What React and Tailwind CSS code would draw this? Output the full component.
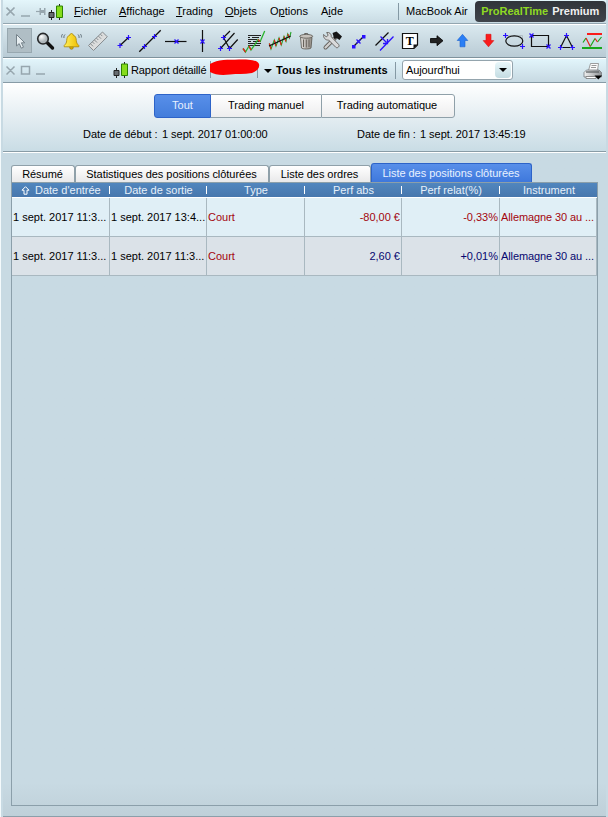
import React from 'react'

const BLUE = '#2a10ff'

// Small anchor marks used by the drawing tools
const Plus = ({ x, y }) => (
  <path d={`M${x - 2.5} ${y}H${x + 2.5}M${x} ${y - 2.5}V${y + 2.5}`} stroke={BLUE} strokeWidth="1.2" />
)
const Cross = ({ x, y }) => (
  <path d={`M${x - 2} ${y - 2}l4 4M${x + 2} ${y - 2}l-4 4`} stroke={BLUE} strokeWidth="1.3" />
)

const tools = [
  {
    name: 'cursor',
    active: true,
    icon: <path d="M9.500 6.500V18l2.700-2.400 2.100 4.600 2.200-1-2.100-4.400h3.400z" fill="#e6edf0" stroke="#75828a" />,
  },
  {
    name: 'zoom',
    icon: (
      <>
        <path d="M14.500 15l5 5" stroke="#111" strokeWidth="3.400" strokeLinecap="round" />
        <circle cx="10" cy="10.700" r="5.300" fill="url(#lens)" stroke="#26282a" strokeWidth="1.600" />
      </>
    ),
  },
  {
    name: 'alert',
    icon: (
      <>
        <circle cx="12.500" cy="19.500" r="1.800" fill="#d9ad00" stroke="#8a6d00" strokeWidth="0.600" />
        <path d="M12.500 5.500c1 0 1.400.6 1.500 1.500 2.500.8 3.200 3 3.300 5.500.1 2.200.8 3.300 2.500 5v1.300H5.200v-1.300c1.700-1.700 2.400-2.800 2.500-5 .1-2.500.8-4.700 3.300-5.500.1-.9.500-1.500 1.500-1.500z" fill="url(#gold)" stroke="#a98500" strokeWidth="0.800" />
        <path d="M6 6.500c-1 1-1.300 2.200-1 3.500M3.700 6c-1 1-1.300 2.200-1 3.500M19 6.500c1 1 1.300 2.200 1 3.500M21.300 6c1 1 1.300 2.200 1 3.500" fill="none" stroke="#53626b" strokeWidth="0.900" />
      </>
    ),
  },
  {
    name: 'ruler',
    icon: (
      <>
        <path d="M3.500 17.500L17.500 4l4.800 4.800L8.500 22.500z" fill="#dcdddd" stroke="#858b8f" />
        <path d="M5.500 15.800l2.500 2.500M7.500 14l1.800 1.800M9.500 12l2.500 2.500M11.500 10.200l1.800 1.800M13.500 8.200l2.500 2.500M15.500 6.300l1.800 1.800" stroke="#7b8286" strokeWidth="0.900" />
      </>
    ),
  },
  {
    name: 'segment',
    icon: (
      <>
        <path d="M9 17.500l8.500-8" stroke="#111" strokeWidth="1.300" />
        <Plus x={9} y={17.5} />
        <Plus x={17.5} y={9.5} />
      </>
    ),
  },
  {
    name: 'line',
    icon: (
      <>
        <path d="M2.300 23.700L23.700 2.300" stroke="#111" strokeWidth="1.300" />
        <Plus x={7.5} y={18.5} />
        <Plus x={17.5} y={8.5} />
      </>
    ),
  },
  {
    name: 'horizontal',
    icon: (
      <>
        <path d="M2 13.500h21.500" stroke="#111" strokeWidth="1.200" />
        <Cross x={13.5} y={13.5} />
      </>
    ),
  },
  {
    name: 'vertical',
    icon: (
      <>
        <path d="M13.500 2v22" stroke="#111" strokeWidth="1.200" />
        <Cross x={13.5} y={13.5} />
      </>
    ),
  },
  {
    name: 'pitchfork',
    icon: (
      <>
        <path d="M8.500 9.500L15 3M5.500 20.500L19.500 5M14.500 20.500l8.200-9M8.500 9.500l6 11" stroke="#111" strokeWidth="1.200" />
        <Plus x={8.5} y={9.5} />
        <Plus x={5.5} y={20.5} />
        <Plus x={14.5} y={20.5} />
      </>
    ),
  },
  {
    name: 'indicator',
    icon: (
      <>
        <path d="M7 7.500h13M7 9.500h2m2 0h7M7 11.500h9M7 13.500h3m2 0h8M7 15.500h13M7 17.500h12" stroke="#222" />
        <path d="M2 20.500L4.500 24l3.500-6 2 4 3.300-4.500 3.700-6 2.200 2L23.700 3" stroke="#28b32c" strokeWidth="1.300" fill="none" />
        <path d="M2 20.500L4.500 24M8 18l2 4M17 11.500l2 2" stroke="#e2231a" strokeWidth="1.300" />
      </>
    ),
  },
  {
    name: 'regression',
    icon: (
      <>
        <path d="M2.300 15.500L4 21l3.300-9L9 18l3-8 2.300 7L17 8.500l2 5L20.700 6l1.800 4L24 4" stroke="#28a52c" strokeWidth="1.100" fill="none" />
        <path d="M2.300 15.500L4 21M7.300 12L9 18M12 10l2.300 7M17 8.500l2 5M20.700 6l1.800 4" stroke="#e2231a" strokeWidth="1.200" />
        <path d="M2 18l21.700-10" stroke="#111" strokeWidth="1.200" />
      </>
    ),
  },
  {
    name: 'trash',
    icon: (
      <>
        <path d="M7.500 9.500h11.500l-1 10.500c-1 1.300-8.500 1.300-9.500 0z" fill="url(#metal)" stroke="#57534d" strokeWidth="0.800" />
        <path d="M10.500 11.500v7.500M13.300 11.500v8M16 11.500v7.500" stroke="#66615a" />
        <path d="M10.800 6.500c0-1.300 4.800-1.300 4.800 0" fill="none" stroke="#57534d" />
        <ellipse cx="13.200" cy="8.300" rx="6.500" ry="1.900" fill="#c7c2bc" stroke="#57534d" strokeWidth="0.800" />
      </>
    ),
  },
  {
    name: 'settings',
    icon: (
      <>
        <path d="M6.500 19.500L16.500 9.500" stroke="#625f5b" strokeWidth="4" strokeLinecap="round" />
        <path d="M6.500 19.500L16.500 9.500" stroke="#d0d0cf" strokeWidth="2.300" strokeLinecap="round" />
        <path d="M13.500 5l4-1.500 5.500 5-2.500 3.500-3-2-2 1.500z" fill="#161616" />
        <path d="M4.500 6.500l2.700 2.300 2-1.500-1.500-2.800c2.700-.5 5 1.500 4.600 4.300l7.200 7.500c1.800 1.600-.9 4.600-2.700 3l-7.200-7.300c-3 .5-5.500-2.300-5.100-5.500z" fill="#d9dadb" stroke="#625f5b" strokeWidth="0.900" />
      </>
    ),
  },
  {
    name: 'extend',
    icon: (
      <>
        <path d="M8 19L19 8" stroke="#111" strokeWidth="1.300" />
        <path d="M7 17h3.500v3.500H7zM17 7h3.500v3.500H17z" fill={BLUE} />
        <Cross x={13.5} y={13.5} />
      </>
    ),
  },
  {
    name: 'parallel',
    icon: (
      <>
        <path d="M4.500 17.500l13-13" stroke="#111" strokeWidth="1.300" />
        <path d="M9 22.500L22.500 8.500M9.500 8.500l6 6M16.500 11v4.500H12" stroke={BLUE} strokeWidth="1.300" fill="none" />
      </>
    ),
  },
  {
    name: 'text',
    icon: (
      <>
        <path d="M5.500 5.500h15v11.500l-3.500 3.500H5.500z" fill="#fff" stroke="#111" strokeWidth="1.200" />
        <path d="M20.500 16.500h-4v4z" fill="#111" />
        <text x="12.700" y="17.300" textAnchor="middle" fontSize="12" fontWeight="700" fontFamily="Liberation Serif, serif">T</text>
      </>
    ),
  },
  {
    name: 'right',
    icon: <path d="M7.500 10.500h6.500V7.700l6 5-6 5v-3H7.500z" fill="#222" stroke="#000" strokeWidth="0.800" />,
  },
  {
    name: 'up',
    icon: <path d="M13.500 6.300l5.300 6.200H16v6.300h-5v-6.300H8.200z" fill="#2b7ff5" stroke="#1b62cf" strokeWidth="0.600" />,
  },
  {
    name: 'down',
    icon: <path d="M13.500 18.800l5.300-6.200H16V6.300h-5v6.300H8.200z" fill="#fa1c1c" stroke="#d90d0d" strokeWidth="0.600" />,
  },
  {
    name: 'ellipse',
    icon: (
      <>
        <path d="M4.500 7.500h17v11" fill="none" stroke="#a9b6bd" strokeWidth="0.800" />
        <ellipse cx="13.300" cy="13" rx="8.500" ry="5.200" fill="none" stroke="#111" strokeWidth="1.200" />
        <Plus x={4.5} y={7.5} />
        <Plus x={21.5} y={18.5} />
      </>
    ),
  },
  {
    name: 'rectangle',
    icon: (
      <>
        <path d="M4.500 7.500h17v11h-17z" fill="none" stroke="#111" strokeWidth="1.200" />
        <Cross x={4.5} y={7.5} />
        <Cross x={21.5} y={18.5} />
      </>
    ),
  },
  {
    name: 'triangle',
    icon: (
      <>
        <path d="M13.500 7.500l-6 12h12z" fill="none" stroke="#111" strokeWidth="1.200" />
        <Plus x={13.5} y={7.5} />
        <Plus x={7.5} y={19.5} />
        <Plus x={19.5} y={19.5} />
      </>
    ),
  },
  {
    name: 'support',
    icon: (
      <>
        <path d="M8 6h15" stroke="#fa1c1c" strokeWidth="2" />
        <path d="M3 20h20" stroke="#17a81c" strokeWidth="2" />
        <path d="M4 14.500l3-4.500M11.300 18.500l4.700-8M18.500 14l4-5" fill="none" stroke="#17a81c" strokeWidth="1.200" />
        <path d="M7 10l4.300 8.500M16 10.500l2.500 3.500" stroke="#e2231a" strokeWidth="1.200" />
      </>
    ),
  },
]

const menus = [
  { pre: '', key: 'F', post: 'ichier', width: 'w-[45px]' },
  { pre: '', key: 'A', post: 'ffichage', width: 'w-[57px]' },
  { pre: '', key: 'T', post: 'rading', width: 'w-[49px]' },
  { pre: '', key: 'O', post: 'bjets', width: 'w-[45px]' },
  { pre: 'O', key: 'p', post: 'tions', width: 'w-[51px]' },
  { pre: 'A', key: 'i', post: 'de', width: 'w-[77px]' },
]

const columns = ["Date d'entrée", 'Date de sortie', 'Type', 'Perf abs', 'Perf relat(%)', 'Instrument']

const rows = [
  { entree: '1 sept. 2017 11:3...', sortie: '1 sept. 2017 13:4...', type: 'Court', abs: '-80,00 €', relat: '-0,33%', color: 'text-[#a3060e]', bg: 'bg-[#e0eff6]' },
  { entree: '1 sept. 2017 11:3...', sortie: '1 sept. 2017 11:3...', type: 'Court', abs: '2,60 €', relat: '+0,01%', color: 'text-[#07076f]', bg: 'bg-[#dbe2e8]' },
]

const GRID = 'grid grid-cols-[98px_97px_98px_97px_98px_97px]'

function Candles() {
  return (
    <svg width="16" height="16" viewBox="0 0 16 16" className="block shrink-0">
      <path d="M3.500 6v10M11.500 0v16" stroke="#222" />
      <path d="M1 8.500h5v5H1z" fill="#676c70" stroke="#222" />
      <path d="M8.500 2h6v11.500h-6z" fill="#86dc1c" stroke="#2d8200" />
    </svg>
  )
}

function MenuBar() {
  return (
    <div className="flex h-6 shrink-0 items-center border-b border-[#93a6b0] bg-gradient-to-b from-[#e4f6fb] to-[#c9dbe3] pb-px">
      <svg width="41" height="14" viewBox="0 0 41 14" className="ml-[3px] shrink-0">
        <path d="M0.500 3.500l8 8M8.500 3.500l-8 8M15 12h9" stroke="#97a6ae" strokeWidth="1.700" fill="none" />
        <path d="M30 7.500h4" stroke="#97a6ae" strokeWidth="1.200" />
        <path d="M33.500 4h1.500v2h3V4h1.500v7H38V9h-3v2h-1.500z" fill="#97a6ae" />
      </svg>
      <div className="mt-0.5 ml-px w-[26px]">
        <Candles />
      </div>
      {menus.map((m) => (
        <span key={m.post} className={`${m.width} shrink-0`}>
          {m.pre}
          <span className="underline">{m.key}</span>
          {m.post}
        </span>
      ))}
      <span className="flex h-[17px] items-center border-l border-[#8499a4] pl-[7px]">MacBook Air</span>
      <div className="ml-[7px] flex h-[21px] w-[131px] items-center justify-center rounded bg-gradient-to-b from-[#30343a] to-[#3f444b] font-bold text-[#f0f0f0]">
        <span className="mr-[4px] text-[#8fd923]">ProRealTime</span>Premium
      </div>
    </div>
  )
}

function Toolbar() {
  return (
    <div className="flex h-[33px] shrink-0 items-start border-t border-white bg-gradient-to-b from-[#dae9ef] to-[#b9cbd5] pt-[3px] pl-1">
      {tools.map((t) => (
        <div key={t.name} className={t.active ? 'mr-px h-[25px] w-[25px] bg-[#b0bec5] shadow-[inset_0_0_0_1px_#98a8b0]' : 'h-[26px] w-[26px]'}>
          <svg width="26" height="26" viewBox="0 0 26 26" className="block overflow-visible">
            {t.icon}
          </svg>
        </div>
      ))}
    </div>
  )
}

function TitleBar() {
  return (
    <div className="flex h-[24px] shrink-0 items-center border-b border-[#879ba6] bg-gradient-to-b from-[#e2f5fb] to-[#c7d9e2] pb-px">
      <svg width="41" height="14" viewBox="0 0 41 14" className="ml-[3px] shrink-0">
        <path d="M0.500 3.500l8 8M8.500 3.500l-8 8M15.500 3.500h8v7.500h-8zM30 11h9" stroke="#97a6ae" strokeWidth="1.500" fill="none" />
      </svg>
      <div className="ml-[66px] w-[18px]">
        <Candles />
      </div>
      <span className="w-[75px] shrink-0 tracking-[-0.1px] whitespace-nowrap">Rapport détaillé</span>
      <svg width="52" height="22" viewBox="0 0 52 22" className="ml-[4px] shrink-0">
        <path d="M.500 2v17M47.500 10v9" stroke="#879ba6" />
        <path d="M0 5c8-5 18-4 29-4.500 8 0 18 0 20 4.500 1 4-2 7-7 9-8 1.500-15 .5-22 1.500C12 16.500 5 16 0 13z" fill="#fd0000" />
      </svg>
      <svg width="8" height="4" viewBox="0 0 8 4" className="mt-[2px] ml-[2px] shrink-0">
        <path d="M0 0h8L4 4z" fill="#000" />
      </svg>
      <span className="ml-1 w-[112px] shrink-0 font-bold tracking-[0.1px] whitespace-nowrap">Tous les instruments</span>
      <div className="ml-[7px] h-[17px] w-[7px] shrink-0 border-l border-[#8499a4]" />
      <div className="flex h-[20px] w-[111px] shrink-0 items-center rounded-[3px] border border-[#94a4ad] bg-white pl-[3px]">
        <span className="grow tracking-[-0.1px]">Aujourd'hui</span>
        <div className="mr-px flex h-4 w-4 items-center justify-center rounded-sm bg-gradient-to-b from-[#e9f7fa] to-[#c4dce2]">
          <svg width="8" height="4" viewBox="0 0 8 4">
            <path d="M0 0h8L4 4z" fill="#000" />
          </svg>
        </div>
      </div>
      <svg width="20" height="18" viewBox="0 0 20 18" className="mt-px ml-[70px] shrink-0">
        <path d="M5.500 8.500L7.500 1.500h8l-1 7" fill="#fbfbfb" stroke="#888" strokeWidth="0.800" />
        <path d="M8.500 3.500h5M8 5.500h5" stroke="#999" />
        <path d="M1 10.500l2.500-2.500h12.500l2.500 2.500V15H1z" fill="url(#metal2)" stroke="#777c80" strokeWidth="0.800" />
        <path d="M3 10h13" stroke="#55595c" strokeWidth="1.200" />
        <path d="M3 14.500h10v2H3z" fill="#fff" stroke="#777" strokeWidth="0.800" />
        <path d="M11.500 13.500h7.500L15.300 17.500z" fill="#000" />
      </svg>
    </div>
  )
}

function Filters() {
  return (
    <div className="h-[69px] shrink-0 border-b border-[#899ca6] bg-gradient-to-b from-white to-[#c9dce5] pt-[11px] shadow-[0_1px_0_#fff]">
      <div className="ml-[151px] flex h-[24px] w-[301px] rounded-[3px] text-center leading-[21px]">
        <div className="w-[57px] rounded-l-[3px] border border-[#2d63c8] bg-gradient-to-b from-[#588fe9] to-[#437ddb] text-[#e8f1ff]">Tout</div>
        <div className="w-[110px] border-y border-[#8fa0a9] bg-gradient-to-b from-white to-[#ededee]">Trading manuel</div>
        <div className="w-[134px] rounded-r-[3px] border border-[#8fa0a9] bg-gradient-to-b from-white to-[#ededee] pr-0.5">Trading automatique</div>
      </div>
      <div className="mt-[8px] flex pl-[80px] leading-[16px] tracking-[-0.04px]">
        <span className="w-[79px]">Date de début :</span>
        <span className="w-[195px]">1 sept. 2017 01:00:00</span>
        <span className="w-[63px]">Date de fin :</span>
        <span>1 sept. 2017 13:45:19</span>
      </div>
    </div>
  )
}

function Tabs() {
  const tab = 'h-[17px] rounded-t-[3px] border border-b-0 border-[#8fa0a9] bg-gradient-to-b from-white to-[#e9e9ea] pr-px text-center leading-[17px]'
  return (
    <div className="flex h-[19px] items-end tracking-[-0.04px]">
      <div className={`${tab} w-[64px]`}>Résumé</div>
      <div className={`${tab} w-[194px]`}>Statistiques des positions clôturées</div>
      <div className={`${tab} w-[102px]`}>Liste des ordres</div>
      <div className="h-[19px] w-[161px] rounded-t-[3px] border border-b-0 border-[#2d63c8] bg-gradient-to-b from-[#588fe9] to-[#3e78dc] pr-px text-center leading-[19px] text-[#e8f1ff]">
        Liste des positions clôturées
      </div>
    </div>
  )
}

function PositionsTable() {
  const cell = 'overflow-hidden border-r border-b border-[#a9b8c0] px-px whitespace-nowrap'
  return (
    <div className="h-[624px] w-[587px] border border-[#8b9faa]">
      <div className="h-[15px] border-b border-white bg-gradient-to-b from-[#5186be] to-[#4777ad] text-[#e6f0fa]">
        <div className={GRID}>
          {columns.map((c, i) => (
            <div key={c} className="flex h-[14px] items-center">
              {i === 0 && (
                <svg width="9" height="9" viewBox="0 0 9 9" className="ml-[9px] shrink-0">
                  <path d="M4.500.7l3.500 3.500H6v4H3v-4H1z" fill="none" stroke="#fff" />
                </svg>
              )}
              <span className={i === 0 ? 'grow pl-[5px] whitespace-nowrap' : 'grow pl-px text-center'}>{c}</span>
              {i < 5 && <span className="h-2 w-px bg-white" />}
            </div>
          ))}
        </div>
      </div>
      {rows.map((r) => (
        <div key={r.abs} className={`${GRID} h-[39px] leading-[38px] ${r.bg}`}>
          <div className={cell}>{r.entree}</div>
          <div className={cell}>{r.sortie}</div>
          <div className={`${cell} text-[#a3060e]`}>{r.type}</div>
          <div className={`${cell} text-right ${r.color}`}>{r.abs}</div>
          <div className={`${cell} text-right ${r.color}`}>{r.relat}</div>
          <div className={`${cell} tracking-[-0.1px] ${r.color}`}>Allemagne 30 au ...</div>
        </div>
      ))}
    </div>
  )
}

export default function App() {
  return (
    <div className="h-[817px] w-[608px] overflow-hidden bg-[#c8dae3] font-['Liberation_Sans',Arial,sans-serif] text-[11px] leading-[14px] text-black">
      <svg width="0" height="0" className="absolute">
        <defs>
          <radialGradient id="lens" cx="35%" cy="30%">
            <stop offset="0" stopColor="#fff" />
            <stop offset="1" stopColor="#aeb6ba" />
          </radialGradient>
          <linearGradient id="gold" x1="0" x2="1">
            <stop offset="0" stopColor="#fff05a" />
            <stop offset="1" stopColor="#eebd00" />
          </linearGradient>
          <linearGradient id="metal" x1="0" x2="1">
            <stop offset="0" stopColor="#e2dfdb" />
            <stop offset="1" stopColor="#928c85" />
          </linearGradient>
          <linearGradient id="metal2" x1="0" x2="1">
            <stop offset="0" stopColor="#f1f1f1" />
            <stop offset="1" stopColor="#8e9295" />
          </linearGradient>
        </defs>
      </svg>
      <div className="flex h-full flex-col border-l border-[#f4fafc] pr-0.5 pl-0.5">
        <MenuBar />
        <Toolbar />
        <div className="h-0.5 shrink-0 border-t border-[#7e929d] bg-white" />
        <TitleBar />
        <Filters />
        <div className="mt-px h-[664px] shrink-0 border-b border-[#8b9faa] bg-gradient-to-b from-[#c8dae3] from-95% to-[#bfd0d9] pt-[10px] pl-2">
          <Tabs />
          <PositionsTable />
        </div>
      </div>
    </div>
  )
}
